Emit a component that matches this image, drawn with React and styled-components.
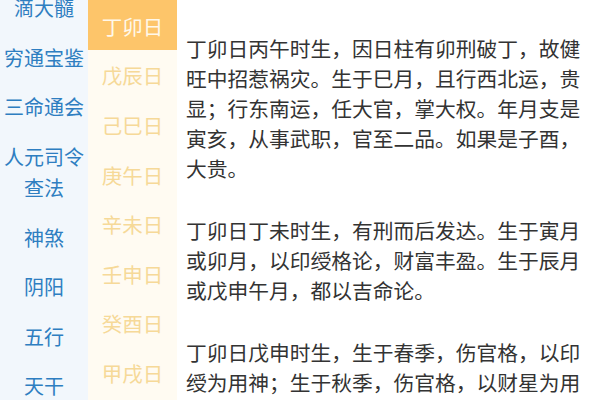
import React from "react";
import styled, { createGlobalStyle } from "styled-components";

const GlobalStyle = createGlobalStyle`
  html, body {
    margin: 0;
    padding: 0;
    height: 100%;
    overflow: hidden;
    background: #ffffff;
  }
  body {
    font-family: "Noto Sans CJK SC", "Noto Sans CJK JP", sans-serif;
  }
`;

const books = [
  ["滴大髓"],
  ["穷通宝鉴"],
  ["三命通会"],
  ["人元司令", "查法"],
  ["神煞"],
  ["阴阳"],
  ["五行"],
  ["天干"],
  ["地支"]
];

const days = ["丁卯日", "戊辰日", "己巳日", "庚午日", "辛未日", "壬申日", "癸酉日", "甲戌日", "乙亥日"];

const paragraphs = [
  "丁卯日丙午时生，因日柱有卯刑破丁，故健旺中招惹祸灾。生于巳月，且行西北运，贵显；行东南运，任大官，掌大权。年月支是寅亥，从事武职，官至二品。如果是子酉，大贵。",
  "丁卯日丁未时生，有刑而后发达。生于寅月或卯月，以印绶格论，财富丰盈。生于辰月或戊申午月，都以吉命论。",
  "丁卯日戊申时生，生于春季，伤官格，以印绶为用神；生于秋季，伤官格，以财星为用神，主富贵双全。"
];

function App() {
  return (
    <>
      <GlobalStyle />
      <Page lang="zh-CN">
        <BookNav>
          <BookList>
            {books.map((lines, i) => (
              <BookItem key={i}>
                {lines.map(l => (
                  <span key={l}>{l}</span>
                ))}
              </BookItem>
            ))}
          </BookList>
        </BookNav>
        <DayNav>
          {days.map((d, i) => (
            <DayItem key={d} active={i === 0}>
              {d}
            </DayItem>
          ))}
        </DayNav>
        <Content>
          {paragraphs.map((p, i) => (
            <Para key={i}>{p}</Para>
          ))}
        </Content>
      </Page>
    </>
  );
}

export default App;

const Page = styled.div`
  display: grid;
  grid-template-columns: 88px 89px 1fr;
  height: 400px;
  overflow: hidden;
`;

const BookNav = styled.nav`
  background-color: #f2f7fc;
  overflow: hidden;
`;

const BookList = styled.div`
  margin-top: -17px;
  display: flex;
  flex-direction: column;
`;

const BookItem = styled.div`
  display: flex;
  flex-direction: column;
  align-items: center;
  padding: 9px 0;
  font-size: 20px;
  line-height: 31.5px;
  color: #2e7ec1;
`;

const DayNav = styled.nav`
  background-color: #fffbf2;
  display: flex;
  flex-direction: column;
  overflow: hidden;
`;

const DayItem = styled.div`
  flex: 0 0 49.6px;
  display: flex;
  align-items: center;
  justify-content: center;
  padding-top: 2px;
  box-sizing: border-box;
  font-size: 20.5px;
  color: ${p => (p.active ? "#fff8ea" : "#f6d998")};
  background-color: ${p => (p.active ? "#fdc56a" : "transparent")};
`;

const Content = styled.div`
  padding: 1px 0 0 9px;
  overflow: hidden;
`;

const Para = styled.p`
  width: 400px;
  margin: 32px 0 0;
  font-size: 20.75px;
  line-height: 30px;
  color: #333333;
`;
